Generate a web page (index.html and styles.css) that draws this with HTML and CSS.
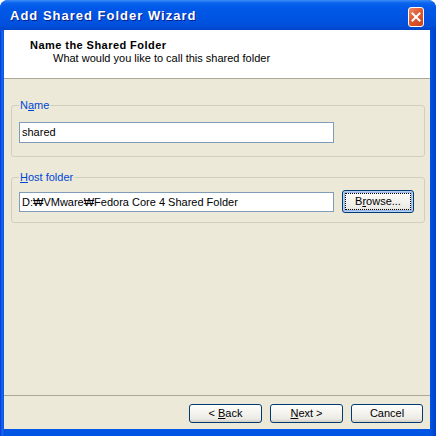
FILE: index.html
```html
<!DOCTYPE html>
<html>
<head>
<meta charset="utf-8">
<link rel="stylesheet" href="styles.css">
</head>
<body>
<div class="window">
  <div class="titlebar">
    <span class="title">Add Shared Folder Wizard</span>
    <span class="close">
      <svg width="14" height="18" viewBox="0 0 14 18"><path d="M3.5 5.5 L10.5 12.5 M10.5 5.5 L3.5 12.5" stroke="#fff" stroke-width="2" stroke-linecap="square"/></svg>
    </span>
  </div>
  <div class="client">
    <div class="header">
      <div class="h-title">Name the Shared Folder</div>
      <div class="h-sub">What would you like to call this shared folder</div>
    </div>
    <div class="content">
      <fieldset class="group g-name">
        <legend>N<u>a</u>me</legend>
        <div class="input name-input">shared</div>
      </fieldset>
      <fieldset class="group g-host">
        <legend><u>H</u>ost folder</legend>
        <div class="row">
          <div class="input">D:₩VMware₩Fedora Core 4 Shared Folder</div>
          <div class="btn browse"><span class="focus">B<u>r</u>owse...</span></div>
        </div>
      </fieldset>
    </div>
    <div class="footer">
      <div class="btn">&lt;&nbsp;<u>B</u>ack</div>
      <div class="btn"><u>N</u>ext&nbsp;&gt;</div>
      <div class="btn">Cancel</div>
    </div>
  </div>
</div>
</body>
</html>
```
FILE: styles.css
```css
html, body {
  margin: 0;
  padding: 0;
  background: #fff;
}
.window {
  width: 436px;
  height: 436px;
  box-sizing: border-box;
  display: flex;
  flex-direction: column;
  background: linear-gradient(to right, #0831D9 0px, #166AEE 2px, #0055E5 4px, #0055E5 430px, #0040C8 436px);
  border-radius: 8px 8px 0 0;
  overflow: hidden;
  font-family: "Liberation Sans", Arial, sans-serif;
  font-size: 11px;
  color: #000;
}
.titlebar {
  height: 30px;
  flex: none;
  display: flex;
  align-items: center;
  justify-content: space-between;
  padding: 0 12px 0 10px;
  background: linear-gradient(to bottom, #3D8DF5 0px, #0A64EE 3px, #0058E8 8px, #0054E3 18px, #0050DA 26px, #0045C8 30px);
}
.title {
  color: #fff;
  font-weight: bold;
  font-size: 13px;
  letter-spacing: 1px;
  text-shadow: 1px 1px 0 #0A1E8C;
  padding-top: 1px;
}
.close {
  width: 14px;
  height: 18px;
  border: 1px solid #fff;
  border-radius: 3px;
  background: linear-gradient(135deg, #EE8B6A 0%, #E2582E 45%, #C94320 100%);
  display: flex;
  margin-top: 3px;
}
.client {
  flex: 1;
  display: flex;
  flex-direction: column;
  margin: 0 6px 7px 4px;
  background: #ECE9D8;
}
.header {
  flex: none;
  background: #fff;
  border-bottom: 1px solid #ACA899;
  padding: 9px 0 0 26px;
  box-sizing: content-box;
  height: 39px;
}
.h-title {
  font-weight: bold;
  letter-spacing: 0.45px;
  line-height: 13px;
}
.h-sub {
  padding-left: 23px;
  line-height: 13px;
}
.content {
  flex: 1;
  padding: 20px 5px 0 7px;
}
.group {
  margin: 0;
  border: 1px solid #D0D0BF;
  border-radius: 3px;
  padding: 10px 7px 13px 7px;
}
.group legend {
  color: #0046D5;
  line-height: 13px;
  padding: 0 1px;
}
.g-host {
  margin-top: 14px;
  padding: 6px 7px 9px 7px;
}
.input {
  box-sizing: border-box;
  width: 315px;
  height: 21px;
  border: 1px solid #7F9DB9;
  background: #fff;
  padding: 0 2px;
  line-height: 19px;
  white-space: nowrap;
}
.row {
  display: flex;
  align-items: center;
  gap: 8px;
}
.row .input {
  height: 20px;
  line-height: 18px;
}
.btn {
  box-sizing: border-box;
  width: 73px;
  height: 19px;
  border: 1px solid #003C74;
  border-radius: 3px;
  background: linear-gradient(to bottom, #FFFFFF 0%, #F5F4EF 40%, #ECEBE6 80%, #D6D0C5 100%);
  display: flex;
  align-items: center;
  justify-content: center;
  line-height: 13px;
}
.browse {
  width: 72px;
  height: 23px;
  padding: 2px;
  box-shadow: inset 0 0 0 1px #B8CFF4, inset 0 0 0 2px #9DB9EB;
}
.focus {
  flex: 1;
  align-self: stretch;
  display: flex;
  align-items: center;
  justify-content: center;
  border: 1px dotted #000;
}
.footer {
  flex: none;
  height: 34px;
  border-top: 1px solid #ACA899;
  display: flex;
  justify-content: flex-end;
  gap: 8px;
  padding: 8px 7px 0 0;
  box-sizing: border-box;
}
.footer .btn:last-child {
  width: 72px;
}
```
